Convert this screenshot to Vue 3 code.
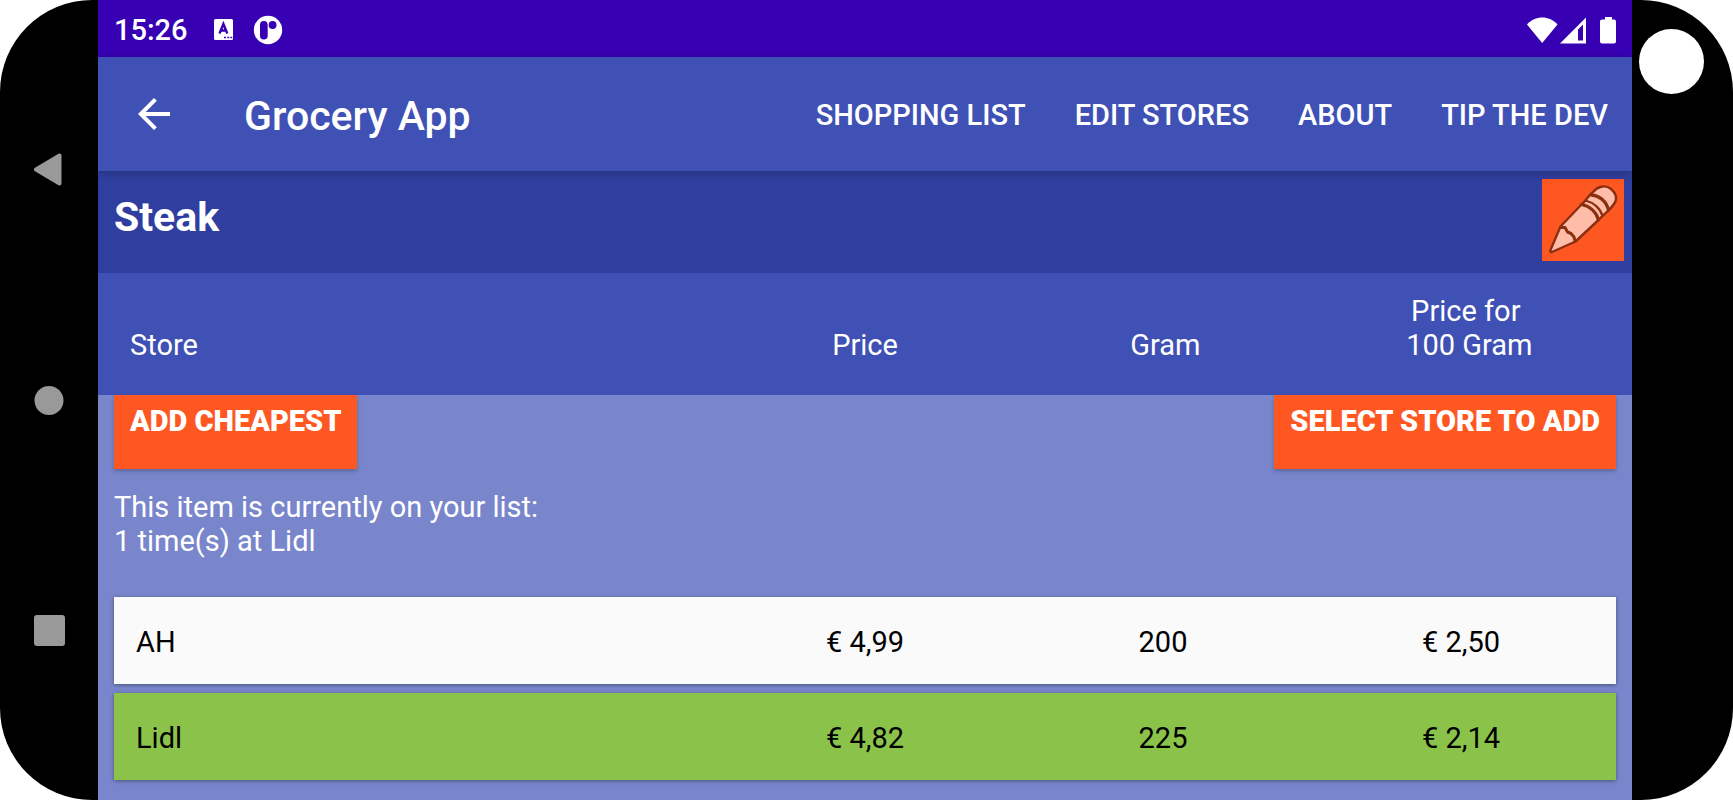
<script setup>
const links = ['Shopping list', 'Edit stores', 'About', 'Tip the dev']

const prices = [
  { store: 'AH', price: '€ 4,99', gram: '200', per100: '€ 2,50', cheapest: false },
  { store: 'Lidl', price: '€ 4,82', gram: '225', per100: '€ 2,14', cheapest: true },
]
</script>

<template>
  <div class="phone">
    <div class="bezel keys">
      <button class="key" type="button" aria-label="Back">
        <svg width="31" height="33" viewBox="0 0 31 33">
          <path d="M2 16.500 L25.500 2.500 V30.500 Z" fill="#999" stroke="#999" stroke-width="4" stroke-linejoin="round" />
        </svg>
      </button>
      <button class="key" type="button" aria-label="Home">
        <svg width="31" height="30" viewBox="0 0 31 30"><circle cx="15" cy="14.500" r="14.500" fill="#999" /></svg>
      </button>
      <button class="key" type="button" aria-label="Recent apps">
        <svg width="31" height="32" viewBox="0 0 31 32"><rect width="31" height="31" rx="3" fill="#999" /></svg>
      </button>
    </div>

    <div class="screen">
      <div class="status">
        <span class="time">15:26</span>
        <svg class="notes" width="70" height="30" viewBox="0 0 70 30" aria-hidden="true">
          <rect x="1" y="4" width="19" height="21" rx="1.500" fill="#fff" />
          <path d="M6.500 18.500 L10.400 9 L14.300 18.500 M8 15.500 H12.800" fill="none" stroke="#3700b3" stroke-width="2.400" />
          <path d="M11 22.500h2M14.300 22.500h2M17.400 22.500h1.800" stroke="#3700b3" stroke-width="1.600" />
          <circle cx="55" cy="15" r="14.200" fill="#fff" />
          <rect x="47" y="6" width="7.700" height="18.500" rx="3.800" fill="#3700b3" />
          <circle cx="59.600" cy="10" r="3.900" fill="#3700b3" />
        </svg>
        <svg class="signals" width="90" height="28" viewBox="0 0 90 28" aria-hidden="true">
          <path d="M1 8.500 C9 -.8 23.500 -.8 31.500 8.500 L16.200 27 Z" fill="#fff" />
          <path d="M34 27.500 L60 1.500 V27.500 Z" fill="#fff" />
          <path d="M52 13.500 L57 8.500 V24.500 H52 Z" fill="#3700b3" />
          <path d="M79 1h7v2.500h2q2 0 2 2v20q0 2-2 2h-12q-2 0-2-2v-20q0-2 2-2H79z" fill="#fff" />
        </svg>
      </div>

      <header class="appbar">
        <button class="back" type="button" aria-label="Go back">
          <svg width="48" height="48" viewBox="0 0 24 24">
            <path d="M20 11H7.830l5.590-5.590L12 4l-8 8 8 8 1.410-1.410L7.830 13H20z" fill="#fff" />
          </svg>
        </button>
        <h1 class="brand">Grocery App</h1>
        <nav class="links">
          <a v-for="link in links" :key="link" href="#">{{ link }}</a>
        </nav>
      </header>

      <section class="titlebar">
        <h2>Steak</h2>
        <button class="edit" type="button" aria-label="Edit item">
          <svg width="82" height="82" viewBox="0 0 82 82">
            <g stroke="#8b2f10" stroke-width="2.400" stroke-linejoin="round" stroke-linecap="round">
              <path d="M8.500 71 L18.500 47.500 L39 26 C43 23 47 16 51 13 C55 8 63 5 69 10 C74 14 76 20 72 25 C68 31 63 34 56 41.500 L33.500 62.500 L10 73 Q7.500 73.500 8.500 71 Z" fill="#ffbda9" />
              <path d="M18.500 48.500 L23 48.500 L25.500 53 L29 54.500 L32 58 L33 62" fill="none" stroke-width="3" />
              <path d="M39.500 25.500 C48 27 54.500 33 56.500 41" fill="none" stroke-width="3.200" />
              <path d="M43.500 21.500 C51.500 23.500 58.500 29.500 60.500 37" fill="none" stroke-width="2.200" />
              <path d="M49.500 16 C57.500 16.500 64.500 22.500 66.500 31" fill="none" stroke-width="3.400" />
            </g>
          </svg>
        </button>
      </section>

      <table class="prices">
        <thead>
          <tr class="heads">
            <th scope="col">Store</th>
            <th scope="col">Price</th>
            <th scope="col">Gram</th>
            <th scope="col">Price for<br />&nbsp;100 Gram</th>
          </tr>
        </thead>
        <tbody class="intro">
          <tr>
            <td colspan="4">
              <div class="actions">
                <button type="button">Add cheapest</button>
                <button type="button">Select store to add</button>
              </div>
              <p>This item is currently on your list:<br />1 time(s) at Lidl</p>
            </td>
          </tr>
        </tbody>
        <tbody class="rows">
          <tr v-for="row in prices" :key="row.store" :class="{ cheapest: row.cheapest }">
            <td>{{ row.store }}</td>
            <td>{{ row.price }}</td>
            <td>{{ row.gram }}</td>
            <td>{{ row.per100 }}</td>
          </tr>
        </tbody>
      </table>
    </div>

    <div class="bezel lens-side"><div class="lens"></div></div>
  </div>
</template>

<style>
body {
  margin: 0;
  background: #fff;
}
</style>

<style scoped>
.phone {
  display: flex;
  box-sizing: border-box;
  min-height: 100vh;
  border-radius: 92px;
  overflow: hidden;
  background: #000;
  color: #fff;
  font-family: Roboto, "Liberation Sans", sans-serif;
  font-size: 29px;
  line-height: 34px;
}
button {
  margin: 0;
  padding: 0;
  border: 0;
  background: none;
  color: inherit;
  font: inherit;
}
svg {
  display: block;
}
h1, h2, p {
  margin: 0;
}
.bezel {
  display: flex;
  flex-direction: column;
  align-items: center;
  flex: none;
  box-sizing: border-box;
}
.keys {
  width: 98px;
  padding: 153px 0;
  justify-content: space-between;
}
.lens-side {
  width: 101px;
  padding: 29px 22px 0 0;
}
.lens {
  width: 65px;
  height: 65px;
  border-radius: 50%;
  background: #fff;
}
.screen {
  flex: 1;
  min-width: 0;
  background: #7986cb;
}
.status {
  display: flex;
  align-items: center;
  box-sizing: border-box;
  height: 57px;
  padding: 2px 16px 0;
  background: #3700b3;
  font-weight: 500;
}
.notes {
  margin-left: 25px;
}
.signals {
  margin-left: auto;
}
.appbar {
  position: relative;
  display: flex;
  align-items: center;
  height: 114px;
  padding: 0 24px 0 32px;
  background: #3f51b5;
  box-shadow: 0 2px 8px rgba(0, 0, 0, 0.25);
}
.brand {
  margin-left: 66px;
  padding-top: 4px;
  font-size: 41px;
  line-height: 48px;
  font-weight: 500;
}
.links {
  display: flex;
  gap: 49px;
  margin-left: auto;
  padding-top: 2px;
}
.links a {
  color: inherit;
  font-weight: 500;
  text-decoration: none;
  text-transform: uppercase;
  white-space: nowrap;
}
.titlebar {
  display: flex;
  justify-content: space-between;
  align-items: flex-start;
  height: 94px;
  padding: 8px 8px 0 16px;
  background: #303f9f;
}
.titlebar h2 {
  padding-top: 14px;
  font-size: 41px;
  line-height: 48px;
  font-weight: 700;
}
.edit {
  background: #ff5722;
}
.prices, .prices thead, .prices tbody, .intro tr, .intro td {
  display: block;
}
.heads, .rows tr {
  display: grid;
  grid-template-columns: 2fr 1fr 1fr 1fr;
}
.heads {
  align-items: end;
  padding: 21px 16px 33px;
  background: #3f51b5;
}
th, td {
  padding: 0;
  font-weight: 400;
  text-align: center;
}
.heads th:first-child, .rows td:first-child {
  padding-left: 16px;
  text-align: left;
}
.intro td {
  padding: 0 16px 39px;
  text-align: left;
}
.actions {
  display: flex;
  justify-content: space-between;
  margin-bottom: 21px;
}
.actions button {
  padding: 9px 16px 31px;
  background: #ff5722;
  box-shadow: 0 2px 4px rgba(0, 0, 0, 0.25);
  font-weight: 900;
  text-transform: uppercase;
}
.rows {
  padding: 0 16px 20px;
}
.rows tr {
  align-items: center;
  box-sizing: border-box;
  height: 87px;
  padding: 2px 6px 0;
  background: #fafafa;
  box-shadow: 0 1px 4px rgba(0, 0, 0, 0.4);
  color: #000;
}
.rows tr + tr {
  margin-top: 9px;
}
.rows .cheapest {
  background: #8bc34a;
}
</style>
